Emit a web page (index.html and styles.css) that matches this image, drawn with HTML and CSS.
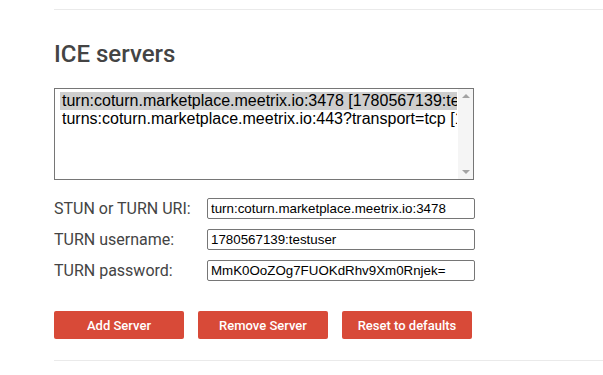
FILE: index.html
```html
<!DOCTYPE html>
<html lang="en">
<head>
    <meta charset="UTF-8" />
    <meta name="viewport" content="width=device-width, initial-scale=1" />
    <title>Trickle ICE</title>
    <link rel="stylesheet" href="styles.css">
</head>
<body>
    <section class="ice">
        <hr class="rule" />
        <h2>ICE servers</h2>

        <div class="servers">
            <div class="options">
                <div class="option selected">turn:coturn.marketplace.meetrix.io:3478 [1780567139:testuser:MmK0OoZOg7FUOKdRhv9Xm0Rnjek=]</div>
                <div class="option">turns:coturn.marketplace.meetrix.io:443?transport=tcp [1780567139:testuser:MmK0OoZOg7FUOKdRhv9Xm0Rnjek=]</div>
            </div>
            <div class="scrollbar">
                <span class="arrow up"></span>
                <span class="arrow down"></span>
            </div>
        </div>

        <div class="fields">
            <div class="field">
                <label for="url">STUN or TURN URI:</label>
                <input type="text" id="url" value="turn:coturn.marketplace.meetrix.io:3478" />
            </div>
            <div class="field">
                <label for="username">TURN username:</label>
                <input type="text" id="username" value="1780567139:testuser" />
            </div>
            <div class="field">
                <label for="password">TURN password:</label>
                <input type="text" id="password" value="MmK0OoZOg7FUOKdRhv9Xm0Rnjek=" />
            </div>
        </div>

        <div class="buttons">
            <button id="add">Add Server</button>
            <button id="remove">Remove Server</button>
            <button id="reset">Reset to defaults</button>
        </div>

        <hr class="rule" />
    </section>
</body>
</html>
```

FILE: styles.css
```css
body {
    margin: 0;
    font-family: Roboto, "Liberation Sans", sans-serif;
    color: #444;
    background: #fff;
}
.ice {
    padding-left: 54px;
}
.rule {
    border: none;
    height: 1px;
    margin: 0;
    background: #eaeaea;
}
.ice > .rule:first-child {
    margin-top: 9px;
}
h2 {
    margin: 28px 0 0 0;
    font-size: 24px;
    line-height: 32px;
    font-weight: 500;
    color: #444;
}
.servers {
    display: flex;
    margin-top: 18px;
    width: 418px;
    height: 90px;
    border: 1px solid #767676;
    background: #fff;
    overflow: hidden;
}
.options {
    flex: 1;
    min-width: 0;
    padding: 3px 1px 0 5px;
    font-family: "Liberation Sans", Arial, sans-serif;
    font-size: 16px;
    line-height: 18px;
    color: #000;
}
.option {
    white-space: nowrap;
    overflow: hidden;
    padding: 0 2px;
}
.option.selected {
    background: #cecece;
}
.scrollbar {
    width: 15px;
    background: #f5f5f5;
    display: flex;
    flex-direction: column;
    justify-content: space-between;
    align-items: center;
    padding: 5px 0;
}
.arrow {
    width: 0;
    height: 0;
    border-left: 4px solid transparent;
    border-right: 4px solid transparent;
}
.arrow.up {
    border-bottom: 4px solid #a3a3a3;
}
.arrow.down {
    border-top: 4px solid #a3a3a3;
}
.fields {
    margin-top: 18px;
    display: flex;
    flex-direction: column;
    gap: 10px;
}
.field {
    display: flex;
    align-items: center;
}
.field label {
    width: 153px;
    font-size: 16px;
    color: #444;
}
.field input {
    width: 268px;
    height: 21px;
    box-sizing: border-box;
    margin: 0;
    padding: 1px 3px;
    border: 1px solid #767676;
    border-radius: 2px;
    font-family: "Liberation Sans", Arial, sans-serif;
    font-size: 13.33px;
    color: #000;
}
.buttons {
    display: flex;
    gap: 14px;
    margin-top: 30px;
    margin-bottom: 21px;
}
button {
    width: 130px;
    height: 28px;
    padding: 0;
    border: none;
    border-radius: 2px;
    background: #d84a38;
    color: #fff;
    font-family: Roboto, "Liberation Sans", sans-serif;
    font-size: 13px;
    font-weight: 500;
    cursor: pointer;
}
button:hover {
    background: #c43c2b;
}
```
